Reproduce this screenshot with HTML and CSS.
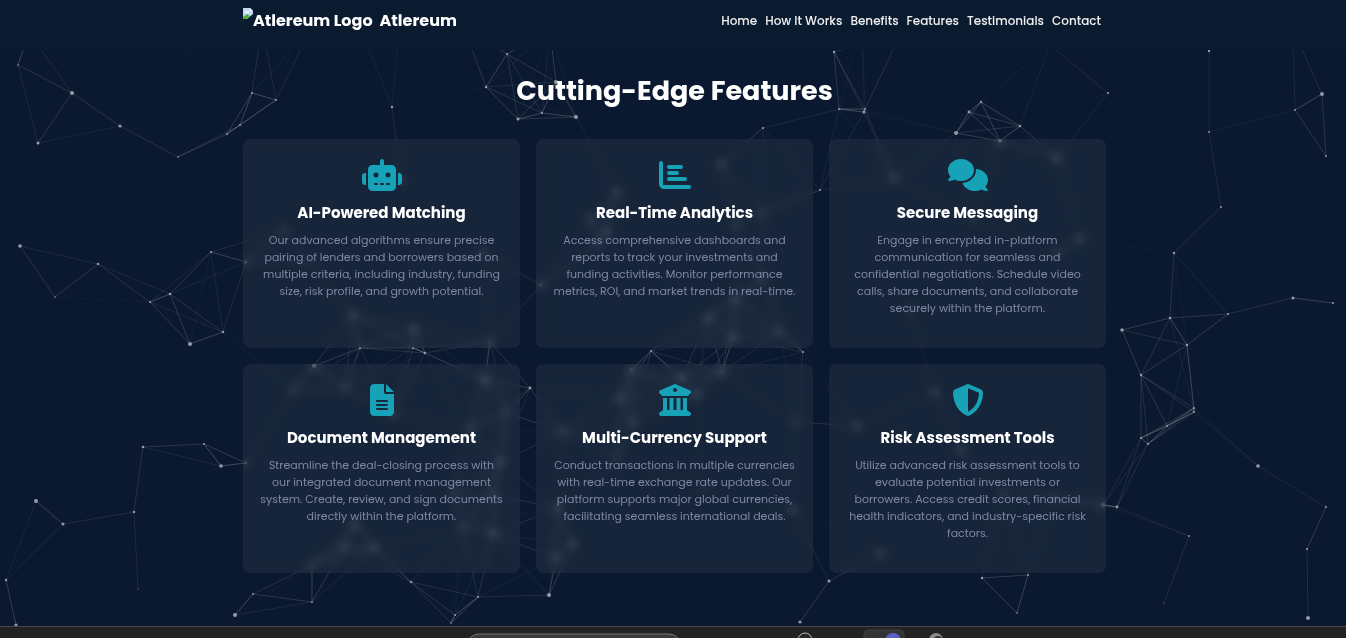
FILE: index.html
```html
<!DOCTYPE html>
<html lang="en">
<head>
<meta charset="utf-8">
<meta name="viewport" content="width=device-width, initial-scale=1">
<title>Atlereum</title>
<link rel="stylesheet" href="styles.css">
</head>
<body>
<svg class="network" id="network" viewBox="0 0 1346 638" preserveAspectRatio="xMidYMid slice" aria-hidden="true"></svg>

<header class="header">
  <div class="container header-row">
    <a class="brand" href="#home">
      <svg class="brand-image" viewBox="0 0 10 11" aria-hidden="true"><path fill="#c3d9f7" d="M0 0h7l3 3v3L4 11H0z"/><path fill="#fff" d="M7 0v3h3z"/><path fill="#eef4fc" d="M2 3h4v2H2z"/><path fill="#4caf3c" d="M0 11V9l4-3 3 2-3 3z"/></svg>
      <span class="brand-alt">Atlereum Logo</span>
      <span>Atlereum</span>
    </a>
    <nav class="nav">
      <a href="#home">Home</a>
      <a href="#how">How It Works</a>
      <a href="#benefits">Benefits</a>
      <a href="#features">Features</a>
      <a href="#testimonials">Testimonials</a>
      <a href="#contact">Contact</a>
    </nav>
  </div>
</header>

<main class="container features" id="features">
  <h2 class="title">Cutting-Edge Features</h2>
  <div class="grid">
    <article class="card">
      <svg class="icon" viewBox="0 0 640 512" aria-hidden="true"><path fill-rule="evenodd" d="M320 0c17.700 0 32 14.300 32 32V96H472c39.800 0 72 32.200 72 72V440c0 39.800-32.200 72-72 72H168c-39.800 0-72-32.200-72-72V168c0-39.800 32.200-72 72-72H288V32c0-17.700 14.300-32 32-32zM208 384a16 16 0 0 0 0 32h32a16 16 0 0 0 0-32zm96 0a16 16 0 0 0 0 32h32a16 16 0 0 0 0-32zm96 0a16 16 0 0 0 0 32h32a16 16 0 0 0 0-32zM264 256a40 40 0 1 0-80 0 40 40 0 1 0 80 0zm152 40a40 40 0 1 0 0-80 40 40 0 1 0 0 80zM48 224H64V416H48c-26.500 0-48-21.500-48-48V272c0-26.500 21.500-48 48-48zm544 0c26.500 0 48 21.500 48 48v96c0 26.500-21.500 48-48 48H576V224z"/></svg>
      <h3>AI-Powered Matching</h3>
      <p>Our advanced algorithms ensure precise pairing of lenders and borrowers based on multiple criteria, including industry, funding size, risk profile, and growth potential.</p>
    </article>
    <article class="card">
      <svg class="icon" viewBox="0 0 512 512" aria-hidden="true"><path d="M32 32c17.700 0 32 14.300 32 32V400c0 8.800 7.200 16 16 16H480a32 32 0 0 1 0 64H80c-44.200 0-80-35.800-80-80V64C0 46.300 14.300 32 32 32zm128 64H352a32 32 0 0 1 0 64H160a32 32 0 0 1 0-64zm0 96H288a32 32 0 0 1 0 64H160a32 32 0 0 1 0-64zm0 96H416a32 32 0 0 1 0 64H160a32 32 0 0 1 0-64z"/></svg>
      <h3>Real-Time Analytics</h3>
      <p>Access comprehensive dashboards and reports to track your investments and funding activities. Monitor performance metrics, ROI, and market trends in real-time.</p>
    </article>
    <article class="card">
      <svg class="icon" viewBox="0 0 640 512" aria-hidden="true"><path d="M208 352c114.900 0 208-78.800 208-176S322.900 0 208 0S0 78.800 0 176c0 38.600 14.700 74.300 39.600 103.400c-3.500 9.400-8.700 17.700-14.200 24.700c-4.800 6.200-9.700 11-13.300 14.300c-1.800 1.600-3.300 2.900-4.300 3.700l-1.300 1C1 327.200-1.400 334.400 .8 340.900S9.100 352 16 352c21.800 0 43.800-5.600 62.100-12.500c9.200-3.500 17.800-7.400 25.300-11.400C134.100 343.300 169.800 352 208 352zM448 176c0 112.300-99.100 196.900-216.500 207C255.800 457.400 336.400 512 432 512c38.200 0 73.900-8.700 104.700-23.900c7.500 4 16 7.900 25.200 11.400c18.300 6.900 40.300 12.500 62.100 12.500c6.900 0 13.100-4.500 15.200-11.100c2.100-6.600-.2-13.800-5.800-17.900l-1.300-1c-1-.8-2.500-2-4.300-3.700c-3.600-3.300-8.500-8.100-13.300-14.300c-5.500-7-10.700-15.400-14.200-24.700c24.900-29 39.600-64.700 39.600-103.400c0-92.800-84.900-168.900-192.600-175.500c.4 5.100 .6 10.300 .6 15.500z"/></svg>
      <h3>Secure Messaging</h3>
      <p>Engage in encrypted in-platform communication for seamless and confidential negotiations. Schedule video calls, share documents, and collaborate securely within the platform.</p>
    </article>
    <article class="card">
      <svg class="icon" viewBox="0 0 384 512" aria-hidden="true"><path fill-rule="evenodd" d="M64 0C28.700 0 0 28.700 0 64V448c0 35.300 28.700 64 64 64H320c35.300 0 64-28.700 64-64V160H256c-17.700 0-32-14.300-32-32V0zM256 0V128H384zM112 256H272a16 16 0 0 1 0 32H112a16 16 0 0 1 0-32zm0 64H272a16 16 0 0 1 0 32H112a16 16 0 0 1 0-32zm0 64H272a16 16 0 0 1 0 32H112a16 16 0 0 1 0-32z"/></svg>
      <h3>Document Management</h3>
      <p>Streamline the deal-closing process with our integrated document management system. Create, review, and sign documents directly within the platform.</p>
    </article>
    <article class="card">
      <svg class="icon" viewBox="0 0 512 512" aria-hidden="true"><path fill-rule="evenodd" d="M243.400 2.600l-224 96c-14 6-21.800 21-18.700 35.800S16.800 160 32 160v8c0 13.300 10.700 24 24 24H456c13.300 0 24-10.700 24-24v-8c15.200 0 28.300-10.700 31.300-25.600s-4.800-29.900-18.700-35.800l-224-96c-8-3.400-17.200-3.400-25.200 0zM128 224H64V420.300l-1.800 1.100-48 32c-11.700 7.800-17 22.400-12.900 35.900S17.900 512 32 512H480c14.100 0 26.500-9.200 30.600-22.700s-1.100-28.100-12.900-35.900l-48-32-1.700-1.100V224H384V416H344V224H280V416H232V224H168V416H128zM256 64a32 32 0 1 1 0 64 32 32 0 1 1 0-64z"/></svg>
      <h3>Multi-Currency Support</h3>
      <p>Conduct transactions in multiple currencies with real-time exchange rate updates. Our platform supports major global currencies, facilitating seamless international deals.</p>
    </article>
    <article class="card">
      <svg class="icon" viewBox="0 0 512 512" aria-hidden="true"><path fill-rule="evenodd" d="M256 0c4.600 0 9.200 1 13.400 2.900L457.700 82.800c22 9.300 38.400 31 38.300 57.200c-.5 99.200-41.300 280.700-213.600 363.200c-16.700 8-36.100 8-52.800 0C57.300 420.700 16.500 239.200 16 140c-.1-26.200 16.300-47.900 38.300-57.200L242.700 2.900C246.800 1 251.400 0 256 0zm0 66.800V444.800C394 378 431.100 230.100 432 141.400z"/></svg>
      <h3>Risk Assessment Tools</h3>
      <p>Utilize advanced risk assessment tools to evaluate potential investments or borrowers. Access credit scores, financial health indicators, and industry-specific risk factors.</p>
    </article>
  </div>
</main>

<footer class="taskbar">
  <svg class="taskbar-art" viewBox="0 0 1346 11" preserveAspectRatio="xMidYMin slice" aria-hidden="true">
    <rect x="467" y="7" width="214" height="24" rx="12" fill="#3b3b3b" stroke="#777"/>
    <circle cx="805" cy="13" r="7" fill="#282828" stroke="#bbb"/>
    <rect x="864" y="3" width="40" height="30" rx="4" fill="#333" stroke="#414141"/>
    <circle cx="893" cy="14" r="8" fill="#5b5fc7"/>
    <circle cx="936" cy="13" r="7" fill="#8b8b8b"/><circle cx="938" cy="14" r="5" fill="#333"/>
  </svg>
</footer>
<script src="network.js"></script>
</body>
</html>
```

FILE: styles.css
```css
* { box-sizing: border-box; }

body {
  margin: 0;
  min-height: 100vh;
  display: flex;
  flex-direction: column;
  background: #0a192f;
  color: #fff;
  font-family: Poppins, Inter, "Open Sans", sans-serif;
}

.network {
  position: fixed;
  inset: 0;
  width: 100%;
  height: 100%;
  z-index: -1;
}
.network line { stroke: #d8d8d8; stroke-width: 0.7; }
.network circle { fill: #969ca6; }

.container {
  width: 100%;
  max-width: 894px;
  margin: 0 auto;
  padding: 0 14px 0 17px;
}

.header { background: #0a1a2f; }
.header-row {
  min-height: 50px;
  padding-bottom: 9px;
  display: flex;
  flex-wrap: wrap;
  align-items: center;
  justify-content: space-between;
}
.brand {
  display: flex;
  align-items: center;
  color: #fff;
  font-size: 16px;
  font-weight: 700;
  line-height: 26px;
  text-decoration: none;
}
.brand-image { width: 10px; height: 11px; align-self: flex-start; }
.brand-alt { margin-right: 7px; }
.nav { display: flex; flex-wrap: wrap; gap: 8px; padding-right: 5px; }
.nav a {
  color: #f0f0f0;
  font-size: 12px;
  font-weight: 500;
  line-height: 20px;
  text-decoration: none;
}

.features { flex: 1; padding-bottom: 53px; }
.title {
  margin: 20px 0 28px;
  text-align: center;
  font-size: 27px;
  font-weight: 700;
  line-height: 41px;
}
.grid {
  display: grid;
  grid-template-columns: repeat(auto-fit, minmax(240px, 1fr));
  grid-auto-rows: 1fr;
  gap: 16px;
}
.card {
  min-height: 209px;
  padding: 20px 16px;
  border-radius: 7px;
  background: rgba(255, 255, 255, 0.055);
  backdrop-filter: blur(4px);
  text-align: center;
}
.icon { display: block; height: 32px; margin: 0 auto; fill: #17a2b8; }
.card h3 {
  margin: 11px 0 9px;
  font-size: 15px;
  font-weight: 700;
  line-height: 21px;
}
.card p {
  margin: 0;
  color: #7d88a6;
  font-size: 11px;
  line-height: 17px;
}

.taskbar {
  height: 12px;
  overflow: hidden;
  border-top: 1px solid #474747;
  background: #222;
}
.taskbar-art { display: block; width: 100%; height: 11px; }
```

FILE: network.js
```js
// Particle positions: x, y, radius.
const nodes = [
  [29,33,1],[18,65,.8],[72,93,2],[38,143,1.5],[120,126,1.6],[172,44,1],[178,157,.8],[227,134,1],[240,125,1],[252,93,1],[276,100,1],[262,25,1],[310,30,1],
  [360,27,1],[400,20,1],[392,107,1.2],[401,181,1.6],[20,246,1.8],[98,264,1.2],[55,297,.8],[150,302,1],[170,294,1.3],[211,252,1],[223,332,1.2],[190,344,2],
  [246,262,1.6],[284,230,1.6],[310,262,1],[353,315,2],[414,328,2],[490,342,1.6],[483,253,1.8],[541,285,1.8],[360,348,1.1],[413,348,1.1],[425,353,1.2],
  [314,366,2],[293,390,1.6],[345,388,1.6],[485,380,2.2],[530,388,1.4],[393,415,1.6],[507,413,1.4],[470,428,1.6],[500,462,2],[493,495,1.6],[453,492,1.4],[463,528,1.4],[493,534,2],
  [355,525,2],[344,547,2],[374,548,2],[312,565,1.5],[253,594,.9],[235,615,2],[312,602,.9],[411,582,1.2],[478,597,1],[455,615,1],[451,623,.8],[549,595,2],[246,463,1.4],
  [143,447,1.3],[204,444,1],[221,466,1.8],[36,501,2],[63,524,1.5],[134,512,1.2],[138,589,.6],[6,580,1.2],[16,625,1.6],
  [465,30,1],[507,54,1],[486,87,1.2],[518,119,1.5],[542,113,1.1],[576,117,2],[556,82,2],[550,30,1],
  [721,164,2],[617,192,2],[607,233,2],[590,218,1.5],[763,212,1.2],[735,224,1.5],[762,278,1.5],[735,299,2],[708,318,2],[780,332,1.8],[733,338,2],[598,245,1.4],[763,128,1.1],
  [651,351,1],[803,352,1],[631,370,2],[682,378,2],[697,395,2],[722,372,2],[620,398,2],[633,423,1.8],[563,432,1.8],[558,508,2],[573,544,2],[556,558,2],[793,510,2],[795,422,1.4],[703,488,1.2],[617,458,1],
  [834,52,1.2],[839,109,.9],[864,112,1.5],[865,109,1],[862,20,1],[900,35,1],[894,178,2],[820,190,1],[969,112,1.4],[981,102,1.2],[956,133,2],[1020,126,1.2],[1000,141,2],[1057,158,2.2],[1050,45,1],[1108,93,1.1],
  [973,218,1.4],[1080,239,2],[1057,253,1.6],[910,308,1.6],[857,426,2],[935,392,2],[961,450,2],[1003,493,1.4],[1053,497,1.6],[1103,505,2],[881,553,2],[829,581,1.5],[800,622,1.6],[982,578,1.2],[1028,575,1],[1017,613,.8],
  [1209,51,1.2],[1209,132,.9],[1295,110,.9],[1322,94,1.9],[1326,156,.9],[1293,30,1],[1221,207,1],[1174,253,1.2],[1170,318,1.3],[1122,330,1.7],[1187,345,1.2],[1228,314,1],[1293,298,1.5],[1333,303,1],
  [1141,375,1.2],[1194,408,1],[1194,412,1],[1167,426,1],[1141,438,1.1],[1148,444,1.1],[1258,466,1.8],[1326,507,1],[1307,549,1],[1308,618,2],[1117,507,1.4],[1189,536,.9],[1164,603,.5]
];
const reach = 105;
const svg = document.getElementById('network');
const add = (name, attrs) => {
  const el = document.createElementNS('http://www.w3.org/2000/svg', name);
  for (const key in attrs) el.setAttribute(key, attrs[key]);
  svg.appendChild(el);
};
// Nearby particles are linked; the link fades with distance.
nodes.forEach(([x1, y1], i) => {
  nodes.slice(i + 1).forEach(([x2, y2]) => {
    const d = Math.hypot(x2 - x1, y2 - y1);
    if (d < reach) add('line', { x1, y1, x2, y2, opacity: (0.5 * (1 - d / reach)).toFixed(3) });
  });
});
nodes.forEach(([cx, cy, r]) => add('circle', { cx, cy, r }));
```
